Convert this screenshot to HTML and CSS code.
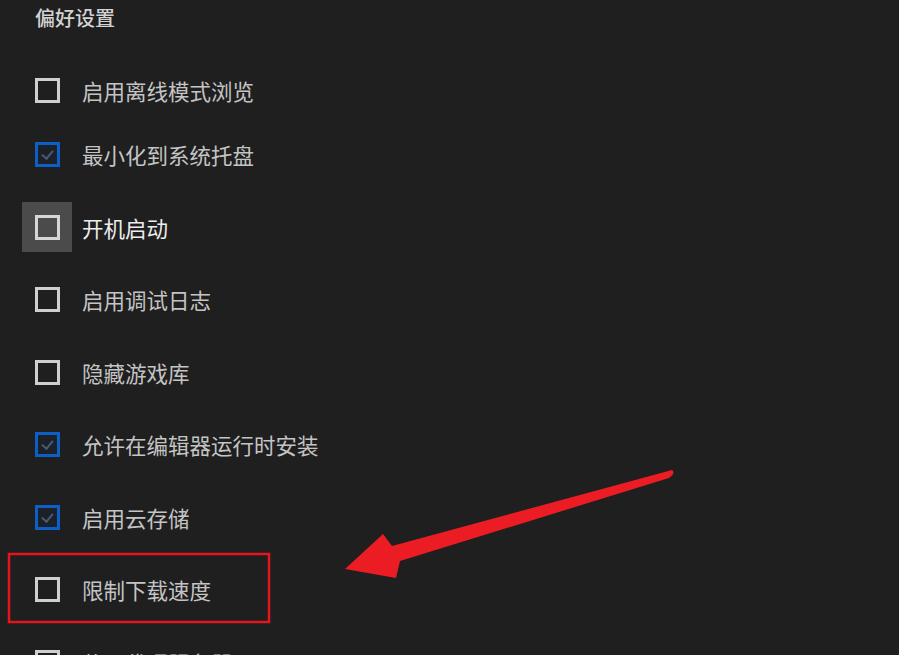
FILE: index.html
```html
<!DOCTYPE html>
<html lang="zh-CN">
<head>
  <meta charset="UTF-8">
  <title>偏好设置</title>
  <meta name="viewport" content="width=device-width, initial-scale=1">
  <link rel="stylesheet" href="styles.css">
</head>
<body>

  <div class="prefs">
    <h2 class="prefs-title">偏好设置</h2>
    <ul class="prefs-list">
      <li class="option"><span class="box-wrap"><span class="box"></span></span><span class="label">启用离线模式浏览</span></li>
      <li class="option is-checked"><span class="box-wrap"><span class="box"></span></span><span class="label">最小化到系统托盘</span></li>
      <li class="option is-hover"><span class="box-wrap"><span class="box"></span></span><span class="label">开机启动</span></li>
      <li class="option"><span class="box-wrap"><span class="box"></span></span><span class="label">启用调试日志</span></li>
      <li class="option"><span class="box-wrap"><span class="box"></span></span><span class="label">隐藏游戏库</span></li>
      <li class="option is-checked"><span class="box-wrap"><span class="box"></span></span><span class="label">允许在编辑器运行时安装</span></li>
      <li class="option is-checked"><span class="box-wrap"><span class="box"></span></span><span class="label">启用云存储</span></li>
      <li class="option"><span class="box-wrap"><span class="box"></span></span><span class="label">限制下载速度</span></li>
      <li class="option"><span class="box-wrap"><span class="box"></span></span><span class="label">使用代理服务器</span></li>
    </ul>
  </div>

  <!-- annotation drawn over the screenshot -->
  <svg class="marks" width="899" height="655" viewBox="0 0 899 655">
    <rect x="9" y="554" width="260" height="68" fill="none" stroke="#e3151f" stroke-width="2.5"/>
    <path d="M672 470 Q676 473 669 478 L400 561 L396 578 L345 569 L383 534 L392 546 Z" fill="#ec1c24"/>
  </svg>

</body>
</html>
```

FILE: styles.css
```css
body {
  font-family: "Noto Sans CJK SC", "Noto Sans", sans-serif;
  background-color: #1f1f1f;
  margin: 0;
  overflow: hidden;
}

.prefs {
  height: 655px;
}

.prefs-title {
  margin: 0;
  padding: 4px 0 0 35px;
  font-size: 20px;
  line-height: 28px;
  font-weight: 500;
  color: #d2d2d2;
}

.prefs-list {
  list-style: none;
  margin: 30px 0 0;
  padding: 0;
}

.option {
  display: flex;
  align-items: center;
  height: 72.5px;
  padding-left: 22px;
  color: #c4c4c4;
  font-size: 21.5px;
}
.option:first-child {
  height: 56.5px;
}

.box-wrap {
  display: flex;
  align-items: center;
  justify-content: center;
  width: 50px;
  height: 50px;
  margin-right: 10px;
}

.box {
  box-sizing: border-box;
  width: 25px;
  height: 25px;
  border: 3px solid #cfcfcf;
}

.is-checked .box {
  position: relative;
  border-color: #0c5fc6;
  background-color: #1c2129;
}
.is-checked .box:after {
  content: "";
  position: absolute;
  left: 6px;
  top: 3px;
  width: 5px;
  height: 9px;
  border-right: 2px solid #4c5a6e;
  border-bottom: 2px solid #4c5a6e;
  transform: rotate(40deg);
}

.is-hover .box-wrap {
  background-color: #4b4b4b;
}
.is-hover .box {
  border-color: #d6d6d6;
}
.is-hover .label {
  color: #ededed;
}

.marks {
  position: absolute;
  left: 0;
  top: 0;
}
```
